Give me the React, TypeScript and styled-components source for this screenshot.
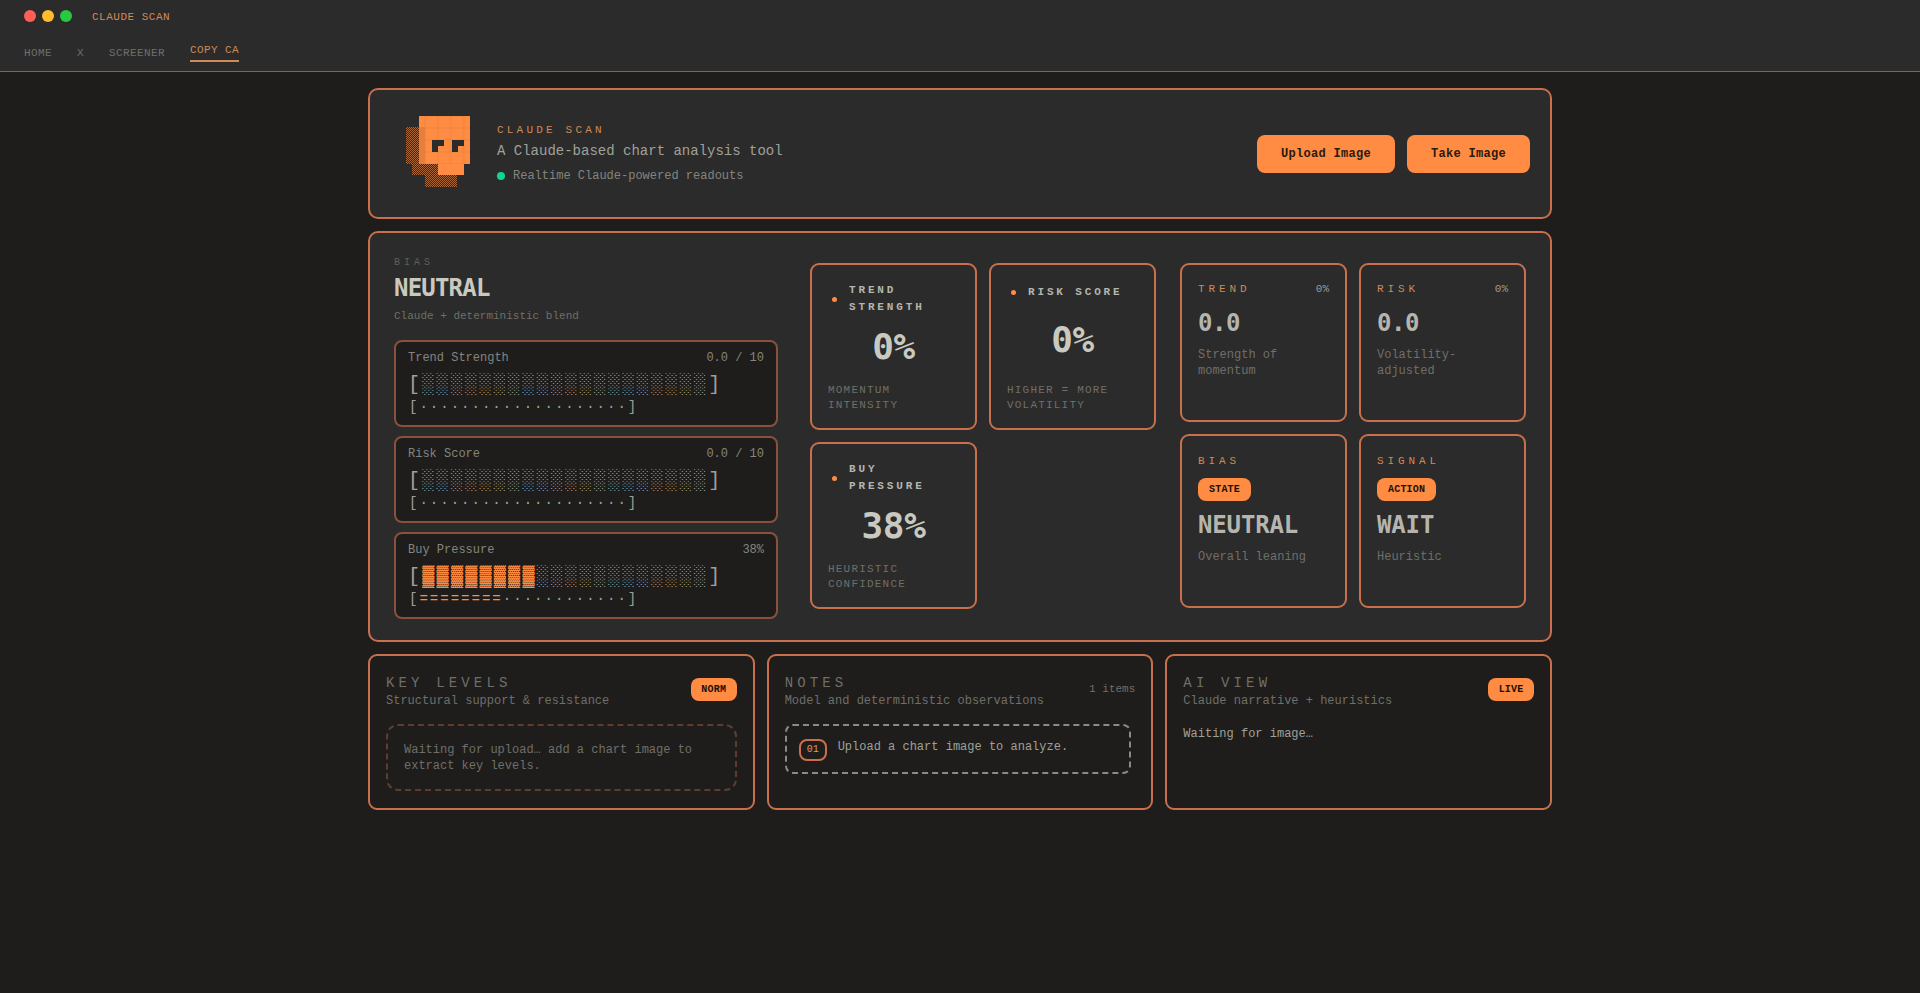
import React from 'react';
import styled, { createGlobalStyle } from 'styled-components';

const MONO = `"Liberation Mono", "DejaVu Sans Mono", monospace`;
const DISPLAY = `"DejaVu Sans Mono", "Liberation Mono", monospace`;
const ACCENT = '#ff8c42';
const EDGE = '#c8704d';
const TEXT = '#c9c9c0';
const MUTED = '#6f6f69';
const DARK = '#1e1d1b';

const GlobalStyle = createGlobalStyle`
  html, body {
    margin: 0;
    padding: 0;
    background: ${DARK};
    font-family: ${MONO};
  }
  * { box-sizing: border-box; }
`;

const Page = styled.div`
  min-height: 993px;
  background: ${DARK};
`;

const Header = styled.header`
  height: 72px;
  background: #2b2b2b;
  border-bottom: 1px solid #6a6a6a;
  padding: 10px 24px 0;
`;

const TitleRow = styled.div`
  display: flex;
  align-items: center;
  height: 12px;
  gap: 6px;
`;

const TrafficDot = styled.span<{ $color: string }>`
  width: 12px;
  height: 12px;
  border-radius: 50%;
  background: ${(p) => p.$color};
`;

const AppName = styled.span`
  margin-left: 14px;
  padding-top: 2px;
  font-size: 11px;
  letter-spacing: 0.5px;
  color: #d08a55;
`;

const Tabs = styled.nav`
  display: flex;
  align-items: flex-start;
  gap: 25px;
  margin-top: 24px;
`;

const Tab = styled.span<{ $active?: boolean }>`
  font-size: 11px;
  line-height: 14px;
  letter-spacing: 0.4px;
  color: ${(p) => (p.$active ? '#d08a55' : MUTED)};
  ${(p) =>
    p.$active &&
    `
    margin-top: -3px;
    padding-bottom: 3px;
    border-bottom: 2px solid #d08a55;
  `}
`;

const Main = styled.main`
  width: 1184px;
  margin: 16px auto 0;
  display: flex;
  flex-direction: column;
  gap: 12px;
`;

const Panel = styled.section`
  border: 2px solid ${EDGE};
  border-radius: 10px;
  background: #2b2b2b;
`;

const Hero = styled(Panel)`
  height: 131px;
  display: flex;
  align-items: center;
  padding: 0 20px 0 36px;
`;

const Logo = styled.svg`
  width: 64px;
  height: 72px;
  margin-top: -3px;
  flex: none;
`;

const HeroText = styled.div`
  margin-left: 27px;
  display: flex;
  flex-direction: column;
  margin-top: -1px;
`;

const Eyebrow = styled.div`
  font-size: 11px;
  line-height: 14px;
  letter-spacing: 3.2px;
  color: #d08a55;
`;

const HeroTitle = styled.div`
  font-size: 14px;
  line-height: 18px;
  margin-top: 5px;
  color: #a0a09a;
`;

const Status = styled.div`
  display: flex;
  align-items: center;
  gap: 8px;
  margin-top: 9px;
  font-size: 12px;
  line-height: 15px;
  color: #85857f;
`;

const StatusDot = styled.span`
  width: 8px;
  height: 8px;
  border-radius: 50%;
  background: #0fd68f;
`;

const HeroActions = styled.div`
  margin-left: auto;
  display: flex;
  gap: 12px;
`;

const ActionButton = styled.button`
  height: 38px;
  padding: 0 24px;
  border: none;
  border-radius: 8px;
  background: ${ACCENT};
  color: #2a1a0e;
  font-family: ${MONO};
  font-size: 12px;
  font-weight: 700;
  letter-spacing: 0.3px;
`;

const Dashboard = styled(Panel)`
  height: 411px;
  padding: 24px 20px 0 24px;
  display: grid;
  grid-template-columns: 384px 345px 345px;
  column-gap: 32px;
`;

const BiasColumn = styled.div`
  display: flex;
  flex-direction: column;
`;

const BiasLabel = styled.div`
  font-size: 10px;
  line-height: 12px;
  letter-spacing: 4px;
  color: #5f5f5a;
`;

const BiasValue = styled.div`
  font-family: ${DISPLAY};
  font-size: 24px;
  line-height: 30px;
  font-weight: 700;
  letter-spacing: -0.8px;
  margin-top: 4px;
  color: ${TEXT};
`;

const BiasHint = styled.div`
  font-size: 11px;
  line-height: 14px;
  margin-top: 6px;
  color: ${MUTED};
`;

const Meters = styled.div`
  display: flex;
  flex-direction: column;
  gap: 9px;
  margin-top: 17px;
`;

const Meter = styled.div`
  height: 87px;
  border: 2px solid #87523c;
  border-radius: 8px;
  background: ${DARK};
  padding: 8px 12px 0;
`;

const MeterHead = styled.div`
  display: flex;
  justify-content: space-between;
  font-size: 12px;
  line-height: 16px;
  color: #85857f;
`;

const BlockLine = styled.div`
  margin-top: 7px;
  font-size: 20px;
  line-height: 24px;
  letter-spacing: 2.3px;
  white-space: pre;
  color: #a0a09a;
`;

const AsciiLine = styled.div`
  padding-left: 1px;
  font-size: 14px;
  line-height: 20px;
  letter-spacing: 2.02px;
  white-space: pre;
  color: #a0a09a;
`;

const Filled = styled.span`
  color: ${ACCENT};
`;

const MetricGrid = styled.div`
  display: grid;
  grid-template-columns: 167px 167px;
  grid-auto-rows: 167px;
  gap: 12px;
  align-content: start;
  padding-top: 6px;
`;

const Card = styled.div`
  border: 2px solid ${EDGE};
  border-radius: 9px;
`;

const MetricCard = styled(Card)`
  padding: 16px 16px 0;
  display: flex;
  flex-direction: column;
`;

const MetricHead = styled.div<{ $tall?: boolean }>`
  display: flex;
  align-items: center;
  height: ${(p) => (p.$tall ? '36px' : '22px')};
  padding-left: 4px;
`;

const MetricDot = styled.span`
  width: 5px;
  height: 5px;
  border-radius: 50%;
  background: ${ACCENT};
  flex: none;
`;

const MetricName = styled.div`
  margin-left: 12px;
  font-size: 11px;
  line-height: 17px;
  font-weight: 700;
  letter-spacing: 2.85px;
  color: #b5b5ae;
`;

const MetricValue = styled.div<{ $tall?: boolean }>`
  height: 56px;
  margin-top: ${(p) => (p.$tall ? '4px' : '11px')};
  text-align: center;
  font-family: ${DISPLAY};
  font-size: 36px;
  line-height: 52px;
  font-weight: 700;
  letter-spacing: -0.4px;
  color: ${TEXT};
`;

const MetricNote = styled.div<{ $tall?: boolean }>`
  margin-top: ${(p) => (p.$tall ? '6px' : '13px')};
  font-size: 11px;
  line-height: 15px;
  letter-spacing: 1.2px;
  color: ${MUTED};
`;

const SummaryGrid = styled.div`
  display: grid;
  grid-template-columns: 167px 167px;
  grid-template-rows: 159px 174px;
  gap: 12px;
  align-content: start;
  padding-top: 6px;
  margin-left: -7px;
`;

const SummaryCard = styled(Card)<{ $lower?: boolean }>`
  padding: ${(p) => (p.$lower ? '18px' : '17px')} 16px 0;
`;

const SummaryHead = styled.div`
  display: flex;
  justify-content: space-between;
  font-size: 11px;
  line-height: 14px;
  color: #9b9b94;
`;

const SummaryLabel = styled.span`
  letter-spacing: 3.9px;
  color: #d08a55;
`;

const BigNumber = styled.div`
  margin-top: 13px;
  font-family: ${DISPLAY};
  font-size: 24px;
  line-height: 28px;
  font-weight: 700;
  letter-spacing: -0.4px;
  color: #b5b5ae;
`;

const BigWord = styled(BigNumber)`
  margin-top: 10px;
  letter-spacing: -0.15px;
`;

const SummaryNote = styled.div`
  margin-top: 10px;
  font-size: 12px;
  line-height: 16px;
  color: ${MUTED};
`;

const Pill = styled.span`
  display: inline-flex;
  align-items: center;
  justify-content: center;
  height: 23px;
  padding: 0 11px;
  border-radius: 8px;
  background: ${ACCENT};
  color: #1c1008;
  font-size: 10px;
  font-weight: 700;
  letter-spacing: 0.2px;
`;

const SummaryPill = styled(Pill)`
  margin-top: 10px;
`;

const HeadPill = styled(Pill)`
  margin-top: 4px;
  padding: 0 10.5px;
`;

const BottomRow = styled.div`
  display: grid;
  grid-template-columns: repeat(3, 1fr);
  gap: 12px;
`;

const BottomCard = styled.section`
  height: 156px;
  border: 2px solid ${EDGE};
  border-radius: 9px;
  background: ${DARK};
  padding: 18px 16px 0;
`;

const BottomHead = styled.div`
  display: flex;
  justify-content: space-between;
  align-items: flex-start;
`;

const BottomTitle = styled.div`
  font-size: 14px;
  line-height: 18px;
  letter-spacing: 4.15px;
  color: ${MUTED};
`;

const BottomSub = styled.div`
  margin-top: 1px;
  font-size: 12px;
  line-height: 16px;
  color: ${MUTED};
`;

const ItemCount = styled.span`
  margin-top: 9px;
  font-size: 11px;
  color: ${MUTED};
`;

const EmptyBox = styled.div`
  margin-top: 15px;
  height: 67px;
  border: 2px dashed #5f3c30;
  border-radius: 12px;
  padding: 16px 16px 0;
  font-size: 12px;
  line-height: 16px;
  color: ${MUTED};
`;

const NoteBox = styled.div`
  margin-top: 15px;
  margin-right: 4px;
  height: 50px;
  border: 2px dashed #8a8a86;
  border-radius: 8px;
  padding: 13px 12px 0;
  display: flex;
  gap: 11px;
  font-size: 12px;
  line-height: 16px;
  color: #a0a09a;
`;

const NoteIndex = styled.span`
  width: 28px;
  height: 22px;
  border: 2px solid ${EDGE};
  border-radius: 8px;
  display: flex;
  align-items: center;
  justify-content: center;
  font-size: 10px;
  color: #e09a5e;
`;

const NarrativeText = styled.div`
  margin-top: 17px;
  font-size: 12px;
  line-height: 16px;
  color: #a0a09a;
`;

const SkullLogo: React.FC = () => (
  <Logo viewBox="0 0 64 72" aria-hidden="true">
    <defs>
      <pattern id="dither" width="2" height="2" patternUnits="userSpaceOnUse">
        <rect width="1" height="1" fill="#a8683c" />
        <rect x="1" y="1" width="1" height="1" fill="#a8683c" />
      </pattern>
      <pattern id="cells" width="12.8" height="12" patternUnits="userSpaceOnUse" x="19">
        <rect width="12.8" height="12" fill="none" stroke="#d97a38" strokeWidth="0.5" />
      </pattern>
    </defs>
    <rect x="0" y="11" width="15" height="37" fill="url(#dither)" />
    <rect x="6" y="44" width="28" height="15" fill="url(#dither)" />
    <rect x="19" y="59" width="32" height="12" fill="url(#dither)" />
    <rect x="13" y="0" width="51" height="48" fill={ACCENT} />
    <rect x="32" y="48" width="26" height="11" fill={ACCENT} />
    <rect x="13" y="0" width="51" height="48" fill="url(#cells)" />
    <rect x="13" y="11" width="6" height="37" fill="#e57f3b" />
    <path d="M26 24h12v6h-6v6h-6z" fill="#2b2b2b" />
    <path d="M46 24h12v6h-6v6h-6z" fill="#2b2b2b" />
  </Logo>
);

const BLOCK_COUNT = 20;

const METERS = [
  { name: 'Trend Strength', value: '0.0 / 10', filled: 0 },
  { name: 'Risk Score', value: '0.0 / 10', filled: 0 },
  { name: 'Buy Pressure', value: '38%', filled: 8 },
];

const App: React.FC = () => (
  <Page>
    <GlobalStyle />
    <Header>
      <TitleRow>
        <TrafficDot $color="#ff5f57" />
        <TrafficDot $color="#febc2e" />
        <TrafficDot $color="#28c840" />
        <AppName>CLAUDE SCAN</AppName>
      </TitleRow>
      <Tabs>
        <Tab>HOME</Tab>
        <Tab>X</Tab>
        <Tab>SCREENER</Tab>
        <Tab $active>COPY CA</Tab>
      </Tabs>
    </Header>
    <Main>
      <Hero>
        <SkullLogo />
        <HeroText>
          <Eyebrow>CLAUDE SCAN</Eyebrow>
          <HeroTitle>A Claude-based chart analysis tool</HeroTitle>
          <Status>
            <StatusDot />
            Realtime Claude-powered readouts
          </Status>
        </HeroText>
        <HeroActions>
          <ActionButton>Upload Image</ActionButton>
          <ActionButton>Take Image</ActionButton>
        </HeroActions>
      </Hero>
      <Dashboard>
        <BiasColumn>
          <BiasLabel>BIAS</BiasLabel>
          <BiasValue>NEUTRAL</BiasValue>
          <BiasHint>Claude + deterministic blend</BiasHint>
          <Meters>
            {METERS.map((m) => (
              <Meter key={m.name}>
                <MeterHead>
                  <span>{m.name}</span>
                  <span>{m.value}</span>
                </MeterHead>
                <BlockLine>
                  {'['}
                  <Filled>{'▓'.repeat(m.filled)}</Filled>
                  {'░'.repeat(BLOCK_COUNT - m.filled)}
                  {']'}
                </BlockLine>
                <AsciiLine>
                  {'['}
                  <Filled>{'='.repeat(m.filled)}</Filled>
                  {'·'.repeat(BLOCK_COUNT - m.filled)}
                  {']'}
                </AsciiLine>
              </Meter>
            ))}
          </Meters>
        </BiasColumn>
        <MetricGrid>
          <MetricCard>
            <MetricHead $tall>
              <MetricDot />
              <MetricName>TREND<br />STRENGTH</MetricName>
            </MetricHead>
            <MetricValue $tall>0%</MetricValue>
            <MetricNote $tall>MOMENTUM<br />INTENSITY</MetricNote>
          </MetricCard>
          <MetricCard>
            <MetricHead>
              <MetricDot />
              <MetricName>RISK SCORE</MetricName>
            </MetricHead>
            <MetricValue>0%</MetricValue>
            <MetricNote>HIGHER = MORE<br />VOLATILITY</MetricNote>
          </MetricCard>
          <MetricCard>
            <MetricHead $tall>
              <MetricDot />
              <MetricName>BUY<br />PRESSURE</MetricName>
            </MetricHead>
            <MetricValue $tall>38%</MetricValue>
            <MetricNote $tall>HEURISTIC<br />CONFIDENCE</MetricNote>
          </MetricCard>
        </MetricGrid>
        <SummaryGrid>
          <SummaryCard>
            <SummaryHead>
              <SummaryLabel>TREND</SummaryLabel>
              <span>0%</span>
            </SummaryHead>
            <BigNumber>0.0</BigNumber>
            <SummaryNote>Strength of<br />momentum</SummaryNote>
          </SummaryCard>
          <SummaryCard>
            <SummaryHead>
              <SummaryLabel>RISK</SummaryLabel>
              <span>0%</span>
            </SummaryHead>
            <BigNumber>0.0</BigNumber>
            <SummaryNote>Volatility-<br />adjusted</SummaryNote>
          </SummaryCard>
          <SummaryCard $lower>
            <SummaryHead>
              <SummaryLabel>BIAS</SummaryLabel>
            </SummaryHead>
            <SummaryPill>STATE</SummaryPill>
            <BigWord>NEUTRAL</BigWord>
            <SummaryNote>Overall leaning</SummaryNote>
          </SummaryCard>
          <SummaryCard $lower>
            <SummaryHead>
              <SummaryLabel>SIGNAL</SummaryLabel>
            </SummaryHead>
            <SummaryPill>ACTION</SummaryPill>
            <BigWord>WAIT</BigWord>
            <SummaryNote>Heuristic</SummaryNote>
          </SummaryCard>
        </SummaryGrid>
      </Dashboard>
      <BottomRow>
        <BottomCard>
          <BottomHead>
            <div>
              <BottomTitle>KEY LEVELS</BottomTitle>
              <BottomSub>Structural support &amp; resistance</BottomSub>
            </div>
            <HeadPill>NORM</HeadPill>
          </BottomHead>
          <EmptyBox>Waiting for upload… add a chart image to extract key levels.</EmptyBox>
        </BottomCard>
        <BottomCard>
          <BottomHead>
            <div>
              <BottomTitle>NOTES</BottomTitle>
              <BottomSub>Model and deterministic observations</BottomSub>
            </div>
            <ItemCount>1 items</ItemCount>
          </BottomHead>
          <NoteBox>
            <NoteIndex>01</NoteIndex>
            Upload a chart image to analyze.
          </NoteBox>
        </BottomCard>
        <BottomCard>
          <BottomHead>
            <div>
              <BottomTitle>AI VIEW</BottomTitle>
              <BottomSub>Claude narrative + heuristics</BottomSub>
            </div>
            <HeadPill>LIVE</HeadPill>
          </BottomHead>
          <NarrativeText>Waiting for image…</NarrativeText>
        </BottomCard>
      </BottomRow>
    </Main>
  </Page>
);

export default App;
